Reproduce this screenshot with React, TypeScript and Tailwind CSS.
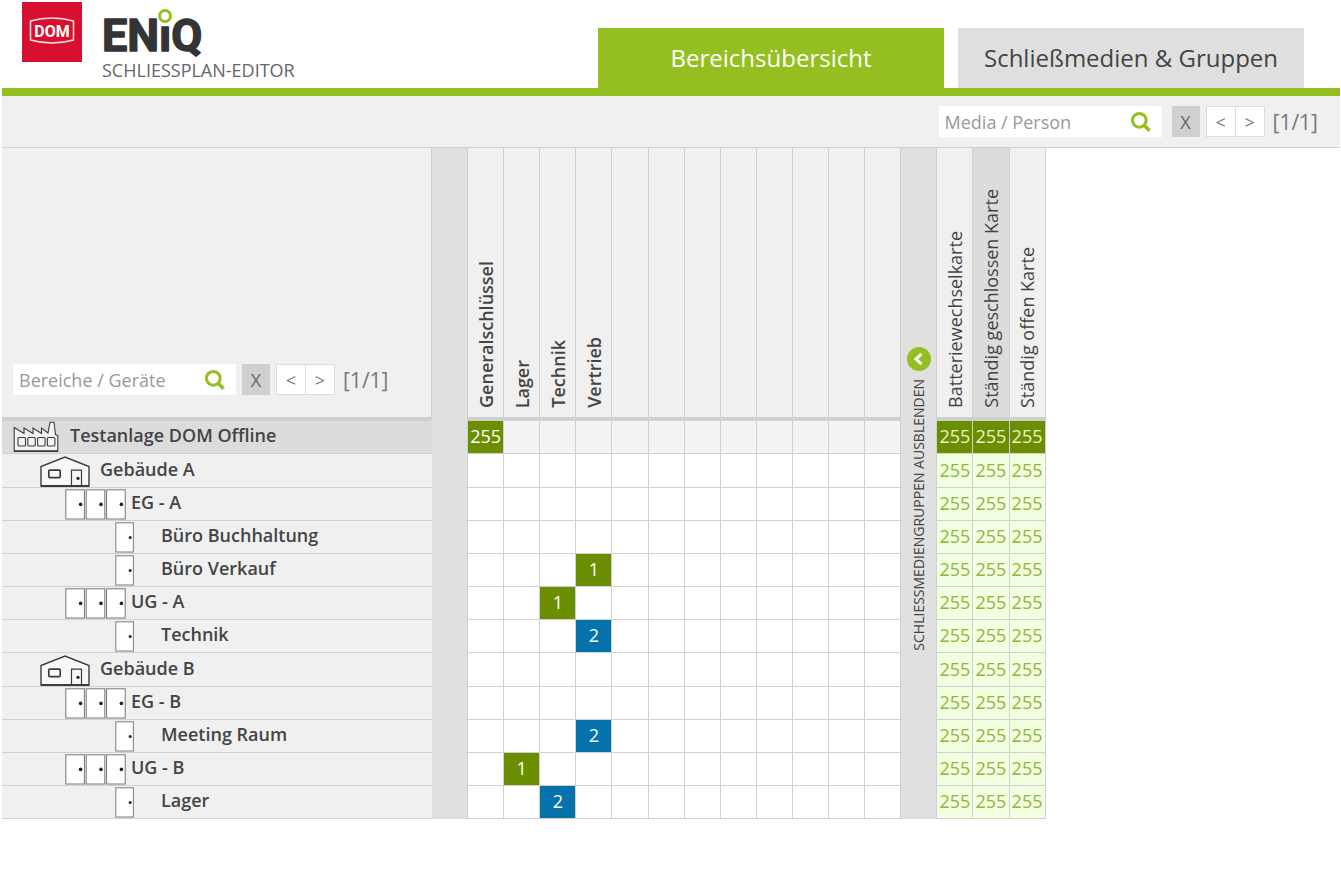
import { useState } from "react"
import clsx from "clsx"

type Kind = "plant" | "building" | "floor" | "room"

type Row = {
    name: string
    kind: Kind
    cells: Record<number, { value: number; color: "green" | "blue" }>
}

const groups = ["Generalschlüssel", "Lager", "Technik", "Vertrieb", "", "", "", "", "", "", "", ""]
const cards = ["Batteriewechselkarte", "Ständig geschlossen Karte", "Ständig offen Karte"]

const rows: Row[] = [
    { name: "Testanlage DOM Offline", kind: "plant", cells: { 0: { value: 255, color: "green" } } },
    { name: "Gebäude A", kind: "building", cells: {} },
    { name: "EG - A", kind: "floor", cells: {} },
    { name: "Büro Buchhaltung", kind: "room", cells: {} },
    { name: "Büro Verkauf", kind: "room", cells: { 3: { value: 1, color: "green" } } },
    { name: "UG - A", kind: "floor", cells: { 2: { value: 1, color: "green" } } },
    { name: "Technik", kind: "room", cells: { 3: { value: 2, color: "blue" } } },
    { name: "Gebäude B", kind: "building", cells: {} },
    { name: "EG - B", kind: "floor", cells: {} },
    { name: "Meeting Raum", kind: "room", cells: { 3: { value: 2, color: "blue" } } },
    { name: "UG - B", kind: "floor", cells: { 1: { value: 1, color: "green" } } },
    { name: "Lager", kind: "room", cells: { 2: { value: 2, color: "blue" } } },
]

const iconSlot: Record<Kind, string> = {
    plant: "w-[68px] pl-[11px]",
    building: "w-[98px] pl-[38px]",
    floor: "w-[129px] pl-[63px]",
    room: "w-[159px] pl-[113px]",
}

const DomLogo = () => (
    <svg width="60" height="60" viewBox="0 0 60 60" role="img" aria-label="DOM">
        <rect width="60" height="60" fill="#d8102f" />
        <path d="M8.5 19 Q30 13 51.5 19 V38 Q30 44 8.5 38 Z" fill="none" stroke="#f9dfe3" strokeWidth="1.5" strokeLinejoin="round" />
        <text x="30" y="34.5" textAnchor="middle" fontFamily="Roboto, sans-serif" fontWeight="700" fontSize="16" fill="#fff">DOM</text>
    </svg>
)

const EniqLogo = () => (
    <svg width="112" height="46" viewBox="0 0 112 46" overflow="visible" role="img" aria-label="ENiQ">
        <text x="0" y="43" fontFamily="Roboto, sans-serif" fontWeight="700" fontSize="45" fill="#333436" stroke="#333436" strokeWidth="1.4" strokeLinejoin="round">ENıQ</text>
        <circle cx="63" cy="8" r="5.4" fill="#fff" stroke="#95bf20" strokeWidth="3" />
    </svg>
)

const SearchIcon = () => (
    <svg width="22" height="22" viewBox="0 0 22 22" fill="none" stroke="#95bf20" strokeWidth="3" aria-hidden="true">
        <circle cx="9.3" cy="9.3" r="6.9" />
        <path d="M14.2 14.2 L19.6 19.8" strokeWidth="3.6" />
    </svg>
)

const PlantIcon = () => (
    <svg width="46" height="32" viewBox="0 0 46 32" fill="none" stroke="#3c3c3c" strokeWidth="1.1">
        <path d="M1.2 30.2 V6.5 L11 12.5 V7 L20 12.5 V7 L28.5 12.5 V7 L35 12 L37 1.2 H41 L42.5 13.5 L44.8 14.5 V30.2 Z" fill="#f4f4f4" />
        <path d="M1 30.2 H45" strokeWidth="1.8" />
        <rect x="5" y="16.5" width="7.5" height="8.5" rx="1" />
        <rect x="14.8" y="16.5" width="7.5" height="8.5" rx="1" />
        <rect x="24.6" y="16.5" width="7.5" height="8.5" rx="1" />
        <rect x="34.4" y="16.5" width="7.5" height="8.5" rx="1" />
    </svg>
)

const BuildingIcon = () => (
    <svg width="50" height="31" viewBox="0 0 50 31" fill="none" stroke="#3c3c3c" strokeWidth="1.4">
        <path d="M1 30 V10.5 L25 1 L49 10.5 V30 Z" fill="#f8f8f8" />
        <path d="M1 30 H49" strokeWidth="1.8" />
        <rect x="8.8" y="14.2" width="11.4" height="7.4" rx="1" strokeWidth="1.7" />
        <path d="M31.5 30 V14.2 H41.5 V30" strokeWidth="1.2" />
        <circle cx="38" cy="22.3" r="1.6" fill="#222" stroke="none" />
    </svg>
)

const FloorIcon = () => (
    <svg width="62" height="31" viewBox="0 0 62 31" fill="#fff" stroke="#777" strokeWidth="1">
        {[0, 20.4, 40.8].map((x) => (
            <g key={x}>
                <rect x={x + 0.8} y="0.8" width="18.6" height="29.2" />
                <circle cx={x + 15.6} cy="15.4" r="1.8" fill="#222" stroke="none" />
            </g>
        ))}
    </svg>
)

const RoomIcon = () => (
    <svg width="20" height="31" viewBox="0 0 20 31" fill="#fff" stroke="#888" strokeWidth="1.1">
        <rect x="0.8" y="0.8" width="17.6" height="29.2" />
        <circle cx="15.2" cy="15.4" r="1.5" fill="#222" stroke="none" />
    </svg>
)

const KindIcon = ({ kind }: { kind: Kind }) => {
    if (kind === "plant") return <PlantIcon />
    if (kind === "building") return <BuildingIcon />
    if (kind === "floor") return <FloorIcon />
    return <RoomIcon />
}

const SearchBar = ({ label, className }: { label: string; className?: string }) => {
    const [query, setQuery] = useState("")

    return (
        <div className={clsx("flex items-center font-normal text-[#777]", className)}>
            <label className="flex h-[31px] w-[223px] items-center bg-white pr-2.5">
                <input
                    type="text"
                    aria-label={label}
                    placeholder={label}
                    value={query}
                    onChange={(e) => setQuery(e.target.value)}
                    className="min-w-0 flex-1 bg-transparent pl-1.5 text-lg outline-none placeholder:text-[#999]"
                />
                <SearchIcon />
            </label>
            <div className="flex items-center">
                <button type="button" onClick={() => setQuery("")} className="h-[31px] w-7 bg-[#d0d0d0] text-lg leading-6 text-[#666]">X</button>
                <button type="button" className="ml-1.5 h-[31px] w-[30px] border border-[#ddd] bg-white text-lg leading-6">&lt;</button>
                <button type="button" className="-ml-px h-[31px] w-[30px] border border-[#ddd] bg-white text-lg leading-6">&gt;</button>
                <span className="ml-2 text-[21px] leading-6">[1/1]</span>
            </div>
        </div>
    )
}

const VerticalText = ({ children, className }: { children: string; className?: string }) => (
    <span className={clsx("inline-block rotate-180 whitespace-nowrap [writing-mode:vertical-rl]", className)}>{children}</span>
)

export default function App() {
    const [tab, setTab] = useState(0)

    return (
        <div className="min-h-screen bg-white pr-px pl-0.5 font-['Open_Sans','Noto_Sans',sans-serif] text-[#444]">
            <header className="flex items-end justify-between border-b-8 border-[#95bf20] pr-9 pl-5">
                <div className="flex gap-5 self-start pt-0.5">
                    <DomLogo />
                    <div className="flex flex-col pt-1.5">
                        <EniqLogo />
                        <span className="mt-1 text-lg leading-6 text-[#63666a]">SCHLIESSPLAN-EDITOR</span>
                    </div>
                </div>
                <nav className="flex gap-3.5 pt-7">
                    {["Bereichsübersicht", "Schließmedien & Gruppen"].map((name, i) => (
                        <button
                            key={name}
                            type="button"
                            onClick={() => setTab(i)}
                            className={clsx("h-[60px] w-[346px] text-2xl", tab === i ? "bg-[#95bf20] text-white" : "bg-[#dfdfdf] text-[#444]")}
                        >
                            {name}
                        </button>
                    ))}
                </nav>
            </header>

            <div className="flex justify-end border-b border-[#d0d0d0] bg-[#f0f0f0] py-2.5 pr-[22px]">
                <SearchBar label="Media / Person" className="gap-2.5" />
            </div>

            <table className="w-[78%] table-fixed border-separate border-spacing-0">
                <colgroup>
                    <col className="w-[430px]" />
                    <col span={17} />
                </colgroup>
                <tbody>
                    <tr className="h-[273px]">
                        <th className="border-r border-b-4 border-[#d0d0d0] bg-[#f0f0f0] pb-[22px] pl-[11px] align-bottom">
                            <SearchBar label="Bereiche / Geräte" className="gap-1.5" />
                        </th>
                        <td rowSpan={13} className="border-r border-[#d0d0d0] bg-[#e0e0e0]" />
                        {groups.map((name, i) => (
                            <th key={i} scope="col" className="border-r border-b-4 border-[#d0d0d0] bg-[#f0f0f0] p-0 pb-1 align-bottom text-lg leading-6 font-semibold">
                                <VerticalText>{name}</VerticalText>
                            </th>
                        ))}
                        <td rowSpan={13} className="border-r border-[#d0d0d0] bg-[#e0e0e0] p-0 pt-[199px] align-top">
                            <button type="button" className="flex w-full flex-col items-center gap-2 text-sm">
                                <svg width="24" height="24" viewBox="0 0 24 24" fill="none" aria-hidden="true">
                                    <circle cx="12" cy="12" r="12" fill="#95bf20" />
                                    <path d="M14.5 6.8 L9 12 L14.5 17.2" stroke="#fff" strokeWidth="3" />
                                </svg>
                                <VerticalText>SCHLIESSMEDIENGRUPPEN AUSBLENDEN</VerticalText>
                            </button>
                        </td>
                        {cards.map((name, i) => (
                            <th
                                key={name}
                                scope="col"
                                className={clsx("border-r border-b-4 border-[#d0d0d0] p-0 pb-1 align-bottom text-lg leading-6 font-normal", i === 1 ? "bg-[#dcdcdc]" : "bg-[#f0f0f0]")}
                            >
                                <VerticalText>{name}</VerticalText>
                            </th>
                        ))}
                    </tr>
                    {rows.map((row) => {
                        const root = row.kind === "plant"
                        return (
                            <tr key={row.name} className={row.kind === "building" ? "h-[34px]" : "h-[33px]"}>
                                <th scope="row" className={clsx("border-b border-[#d0d0d0] p-0 text-left align-bottom text-lg leading-6 font-semibold", root ? "bg-[#dcdcdc]" : "bg-[#f0f0f0]")}>
                                    <div className="flex h-8 items-end">
                                        <span className={clsx("shrink-0", iconSlot[row.kind])}>
                                            <KindIcon kind={row.kind} />
                                        </span>
                                        <span className="pb-1.5">{row.name}</span>
                                    </div>
                                </th>
                                {groups.map((_, i) => {
                                    const cell = row.cells[i]
                                    return (
                                        <td
                                            key={i}
                                            className={clsx(
                                                "border-r border-b border-[#d0d0d0] p-0 pb-0.5 text-center text-lg leading-6",
                                                !cell && root && "bg-[#f3f3f3]",
                                                cell?.color === "green" && "bg-[#6b8e00] text-white",
                                                cell?.color === "blue" && "bg-[#0572ac] text-white"
                                            )}
                                        >
                                            {cell?.value}
                                        </td>
                                    )
                                })}
                                {cards.map((card) => (
                                    <td
                                        key={card}
                                        className={clsx(
                                            "border-r border-b border-[#d0d0d0] p-0 pb-0.5 text-center text-lg leading-6",
                                            root ? "bg-[#6b8e00] text-[#e9f5c8]" : "bg-[#f2ffe0] text-[#8fb63c]"
                                        )}
                                    >
                                        255
                                    </td>
                                ))}
                            </tr>
                        )
                    })}
                </tbody>
            </table>
        </div>
    )
}
